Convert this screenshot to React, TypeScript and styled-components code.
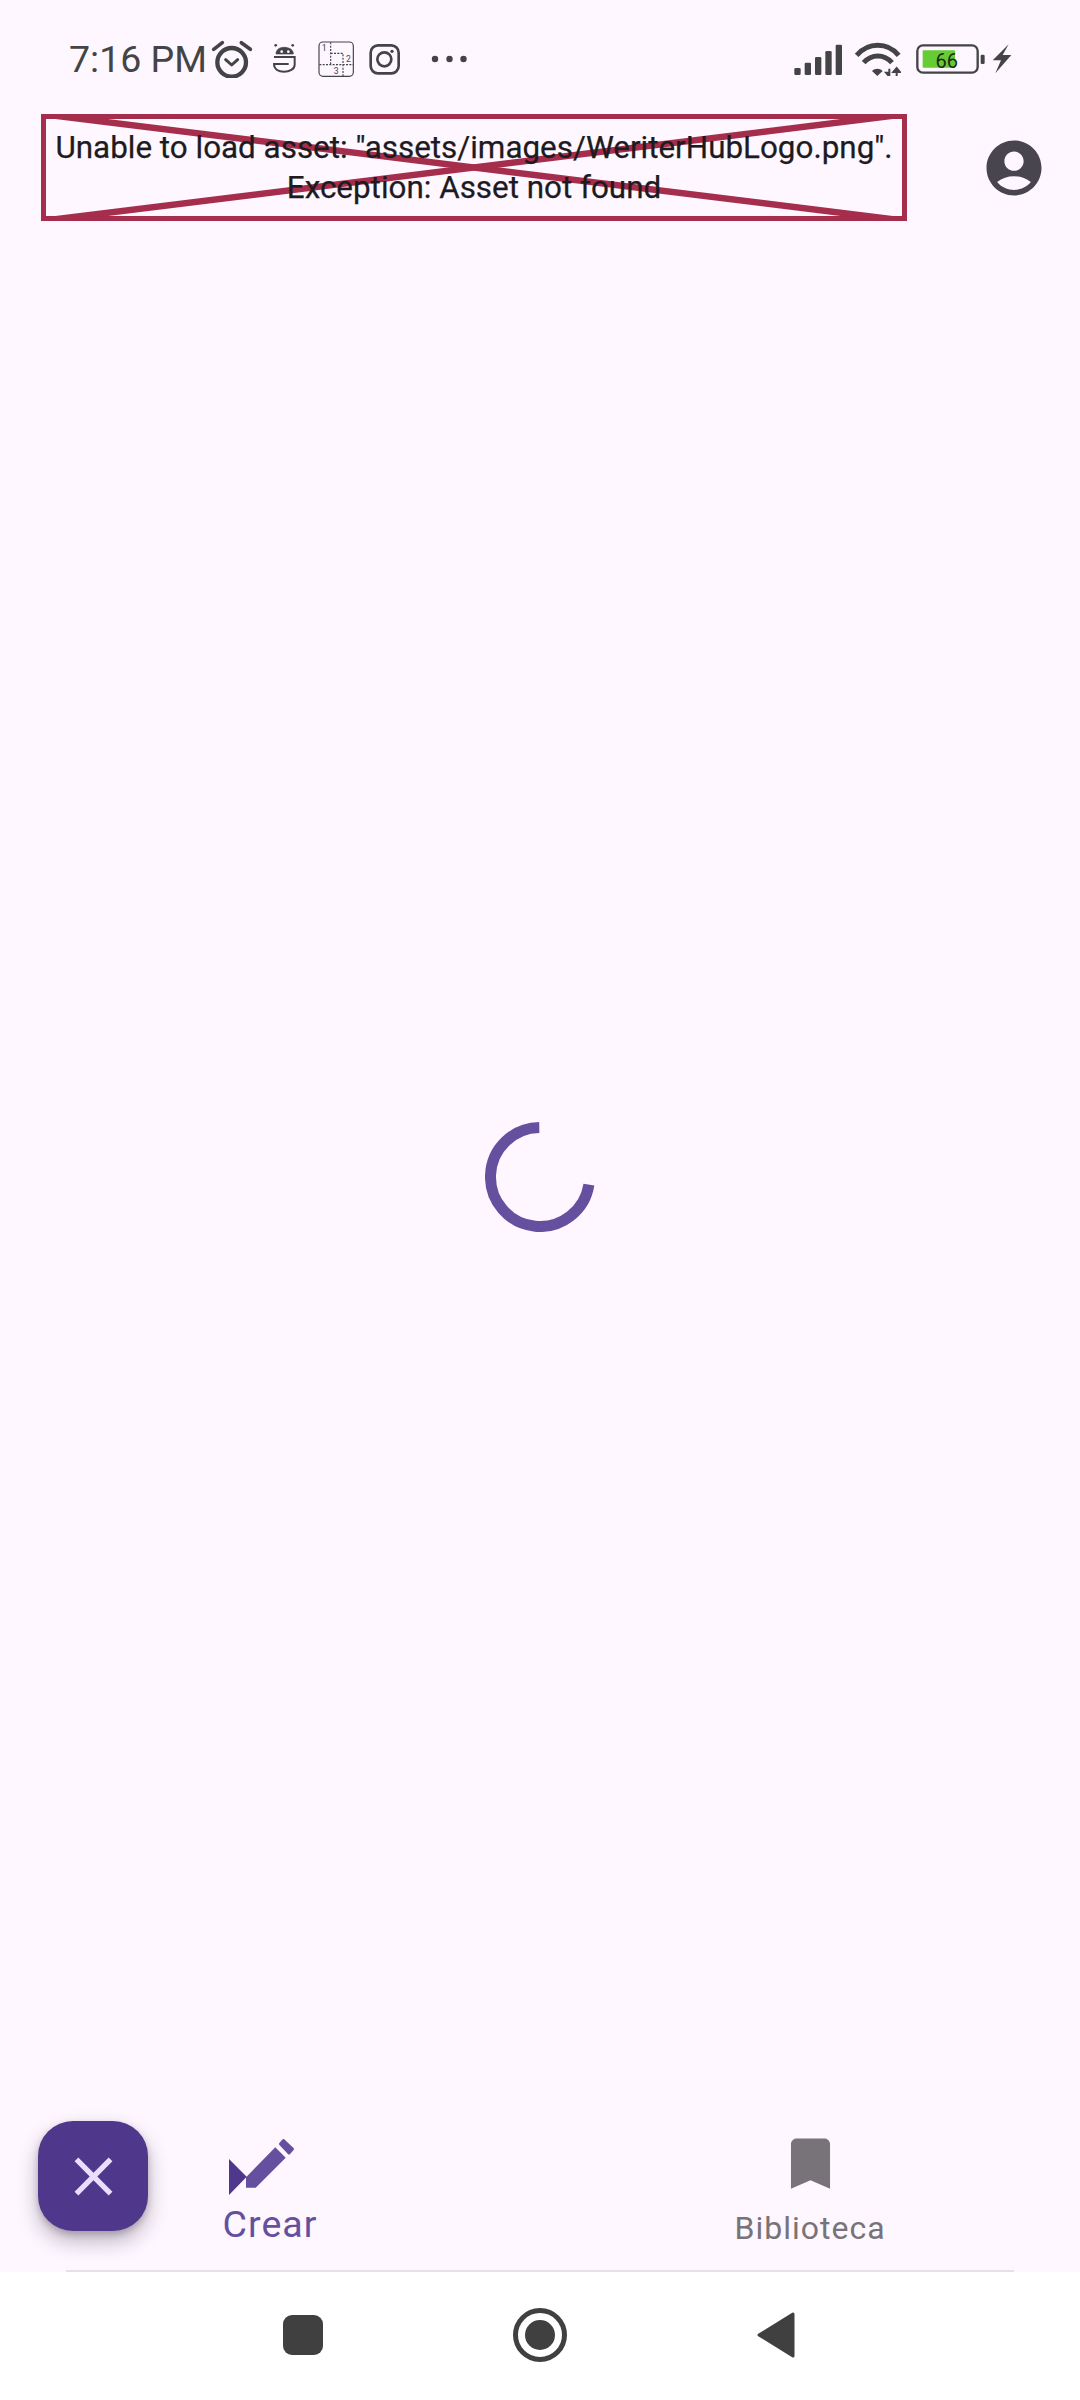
import styled, { createGlobalStyle } from 'styled-components';
import { MdAccountCircle, MdBookmark, MdClose } from 'react-icons/md';

const GlobalStyle = createGlobalStyle`
    html, body {
        margin: 0;
        padding: 0;
        background: #ffffff;
    }
    * {
        box-sizing: border-box;
    }
`;

const iconColor = '#444446';

function AlarmIcon() {
    return (
        <StatusSvg $gap={4} width={42} height={38} viewBox="518 58 126 114" fill="none" stroke={iconColor}>
            <circle cx="580" cy="125" r="43" strokeWidth="13" />
            <path d="M526 86 L552 66 M609 66 L636 86" strokeWidth="11" strokeLinecap="round" />
            <path d="M562 117 L580 133 L598 117" strokeWidth="9" strokeLinecap="round" strokeLinejoin="round" />
        </StatusSvg>
    );
}

function RobotIcon() {
    return (
        <StatusSvg $gap={19} width={24} height={34} viewBox="700 68 72 102" fill="none" stroke={iconColor}>
            <path d="M712 104 C712 90 724 84 736 84 C750 84 764 90 764 104 Z" fill={iconColor} strokeWidth="2" />
            <circle cx="711" cy="78" r="4" fill={iconColor} strokeWidth="0" />
            <circle cx="762" cy="78" r="4" fill={iconColor} strokeWidth="0" />
            <circle cx="729" cy="97" r="4" fill="#fef7ff" strokeWidth="0" />
            <circle cx="749" cy="97" r="4" fill="#fef7ff" strokeWidth="0" />
            <path d="M706 113 H768 V136 C768 150 752 157 736 157 C720 157 706 150 706 134 H750" strokeWidth="6" />
        </StatusSvg>
    );
}

function PuzzleIcon() {
    return (
        <StatusSvg $gap={21.5} width={36} height={36} viewBox="830 62 108 108" fill="none" stroke="#444446">
            <rect x="833" y="65" width="103" height="103" rx="12" strokeWidth="3.5" />
            <path
                d="M868 66 V133 M834 133 H936 M868 99 H905 V167"
                strokeWidth="3.5"
                strokeDasharray="6 4"
            />
            <PuzzleNumber x="841" y="92">1</PuzzleNumber>
            <PuzzleNumber x="914" y="125">2</PuzzleNumber>
            <PuzzleNumber x="877" y="162">3</PuzzleNumber>
        </StatusSvg>
    );
}

function InstagramIcon() {
    return (
        <StatusSvg $gap={15.5} width={31} height={31} viewBox="989 70 93 93" fill="none" stroke={iconColor}>
            <rect x="994" y="74" width="84" height="84" rx="22" strokeWidth="8" />
            <circle cx="1035" cy="116" r="21" strokeWidth="8" />
            <circle cx="1058" cy="92" r="5" fill={iconColor} strokeWidth="0" />
        </StatusSvg>
    );
}

function MoreDots() {
    return (
        <StatusSvg $gap={30} width={40} height={10} viewBox="0 0 40 10" fill={iconColor}>
            <circle cx="5" cy="5" r="3.2" />
            <circle cx="19.5" cy="5" r="3.2" />
            <circle cx="33.5" cy="5" r="3.2" />
        </StatusSvg>
    );
}

function SignalIcon() {
    const bars = [
        { x: 103, y: 143 },
        { x: 134, y: 127 },
        { x: 165, y: 110 },
        { x: 196, y: 92 },
        { x: 227, y: 73 },
    ];
    return (
        <StatusSvg $gap={0} width={48} height={31} viewBox="102 71 144 93" fill={iconColor}>
            {bars.map((b) => (
                <rect key={b.x} x={b.x} y={b.y} width="19" height={164 - b.y} rx="4" />
            ))}
        </StatusSvg>
    );
}

function WifiIcon() {
    return (
        <StatusSvg $gap={12} width={47} height={34} viewBox="282 64 141 102" fill="none" stroke={iconColor}>
            <path d="M290 104 C325 64 382 64 416 104" strokeWidth="15" />
            <path d="M311 126 C335 99 372 99 396 126" strokeWidth="15" />
            <path d="M336 151 L352 166 L368 151 C359 142 345 142 336 151 Z" fill={iconColor} strokeWidth="0" />
            <path d="M388 144 V168 M378 156 L388 168 L388 156 Z M410 168 V142 M400 154 L410 142 L420 154 Z" fill={iconColor} strokeWidth="6" />
        </StatusSvg>
    );
}

function BatteryIcon() {
    return (
        <StatusSvg $gap={15} width={70} height={31} viewBox="468 71 210 93" fill="none" stroke={iconColor}>
            <rect x="472" y="75" width="181" height="82" rx="17" strokeWidth="7" />
            <rect x="488" y="90" width="97" height="52" rx="3" fill="#66cc33" strokeWidth="0" />
            <BatteryLevel x="560" y="143" textAnchor="middle">66</BatteryLevel>
            <rect x="662" y="103" width="12" height="28" rx="4" fill={iconColor} strokeWidth="0" />
        </StatusSvg>
    );
}

function BoltIcon() {
    return (
        <StatusSvg $gap={6} width={20} height={30} viewBox="695 73 60 90" fill={iconColor}>
            <path d="M745 74 L697 122 H722 L705 161 L753 106 H727 Z" />
        </StatusSvg>
    );
}

function PencilIcon() {
    return (
        <svg width={90} height={65} viewBox="0 0 90 65">
            <path d="M4 24 L21.7 41.7 L4 60 Z" fill="#4f378b" />
            <path d="M21 42.3 L50.3 12.3 L60.7 22.7 L30.7 52.7 H21 Z" fill="#65509f" />
            <path
                d="M55.5 9 L58.5 5.5 L67.5 14 L64 18 Z"
                fill="#65509f"
                stroke="#65509f"
                strokeWidth="3"
                strokeLinejoin="round"
            />
        </svg>
    );
}

export default function App() {
    return (
        <Screen>
            <GlobalStyle />
            <StatusBar>
                <Clock>7:16 PM</Clock>
                <AlarmIcon />
                <RobotIcon />
                <PuzzleIcon />
                <InstagramIcon />
                <MoreDots />
                <StatusRight>
                    <SignalIcon />
                    <WifiIcon />
                    <BatteryIcon />
                    <BoltIcon />
                </StatusRight>
            </StatusBar>
            <AppBar>
                <MissingImage>
                    <CrossLines viewBox="0 0 866 107" preserveAspectRatio="none">
                        <line x1="0" y1="0" x2="866" y2="107" />
                        <line x1="866" y1="0" x2="0" y2="107" />
                    </CrossLines>
                    <ErrorText>
                        Unable to load asset: "assets/images/WeriterHubLogo.png".
                        <br />
                        Exception: Asset not found
                    </ErrorText>
                </MissingImage>
                <Avatar>
                    <MdAccountCircle size={66} />
                </Avatar>
            </AppBar>
            <Content>
                <svg width={110} height={110} viewBox="0 0 110 110">
                    <path
                        d="M54.3 5.5 A49.5 49.5 0 1 0 103.9 62.6"
                        fill="none"
                        stroke="#65509f"
                        strokeWidth="11"
                    />
                </svg>
            </Content>
            <BottomNav>
                <Fab>
                    <MdClose size={65} />
                </Fab>
                <NavItem $active>
                    <NavIcon $top={25}>
                        <PencilIcon />
                    </NavIcon>
                    <NavLabel $active>Crear</NavLabel>
                </NavItem>
                <NavItem>
                    <NavIcon $top={20}>
                        <MdBookmark size={67} />
                    </NavIcon>
                    <NavLabel>Biblioteca</NavLabel>
                </NavItem>
            </BottomNav>
            <NavDivider />
            <SystemNav>
                <RecentsKey />
                <svg width={54} height={54} viewBox="0 0 54 54">
                    <circle cx="27" cy="27" r="24.5" fill="none" stroke="#404040" strokeWidth="5" />
                    <circle cx="27" cy="27" r="15" fill="#404040" />
                </svg>
                <svg width={38} height={46} viewBox="0 0 38 46">
                    <path
                        d="M36 2 V44 L2 23 Z"
                        fill="#404040"
                        stroke="#404040"
                        strokeWidth="3"
                        strokeLinejoin="round"
                    />
                </svg>
            </SystemNav>
        </Screen>
    );
}

const Screen = styled.div`
    width: 1080px;
    height: 2400px;
    display: flex;
    flex-direction: column;
    background: #fef7ff;
    font-family: Roboto, 'Liberation Sans', sans-serif;
    overflow: hidden;
`;

const StatusBar = styled.div`
    height: 114px;
    padding: 4px 68px 0 69px;
    display: flex;
    align-items: center;
    flex-shrink: 0;
`;

const Clock = styled.span`
    font-size: 37.5px;
    line-height: 42px;
    color: #444446;
`;

const StatusRight = styled.div`
    margin-left: auto;
    display: flex;
    align-items: center;
`;

const StatusSvg = styled.svg<{ $gap: number }>`
    margin-left: ${({ $gap }) => $gap}px;
    flex-shrink: 0;
`;

const PuzzleNumber = styled.text`
    font-family: Roboto, sans-serif;
    font-size: 26px;
    fill: #444446;
    stroke: none;
`;

const BatteryLevel = styled.text`
    font-family: Roboto, sans-serif;
    font-size: 60px;
    fill: #1f2a14;
    stroke: none;
`;

const AppBar = styled.div`
    height: 107px;
    padding: 0 33px 0 41px;
    display: flex;
    align-items: center;
    justify-content: space-between;
    flex-shrink: 0;
`;

const MissingImage = styled.div`
    position: relative;
    width: 866px;
    height: 107px;
    border: 5px solid #a52e4c;
    display: flex;
    align-items: center;
    justify-content: center;
`;

const CrossLines = styled.svg`
    position: absolute;
    inset: -5px;
    width: 866px;
    height: 107px;

    line {
        stroke: #a52e4c;
        stroke-width: 6.5;
    }
`;

const ErrorText = styled.div`
    position: relative;
    font-size: 31.4px;
    line-height: 40px;
    color: #1d1b20;
    -webkit-text-stroke: 0.25px #1d1b20;
    text-align: center;
    white-space: nowrap;
`;

const Avatar = styled.div`
    display: flex;
    color: #49454f;
`;

const Content = styled.main`
    flex: 1;
    display: flex;
    align-items: center;
    justify-content: center;
    padding-top: 22px;
`;

const BottomNav = styled.nav`
    position: relative;
    height: 160px;
    display: grid;
    grid-template-columns: 1fr 1fr;
    flex-shrink: 0;
    box-shadow: 0 -10px 0 #fdf8fe;
`;

const Fab = styled.div`
    position: absolute;
    left: 38px;
    top: 11px;
    width: 110px;
    height: 110px;
    border-radius: 35px;
    background: #4f378b;
    color: #eaddff;
    display: flex;
    align-items: center;
    justify-content: center;
    box-shadow: 0 10px 20px rgba(30, 20, 40, 0.3), 0 3px 6px rgba(30, 20, 40, 0.2);
`;

const NavItem = styled.div<{ $active?: boolean }>`
    display: flex;
    flex-direction: column;
    align-items: center;
    color: ${({ $active }) => ($active ? '#65509f' : '#787378')};
`;

const NavIcon = styled.div<{ $top: number }>`
    display: flex;
    height: 90px;
    padding-top: ${({ $top }) => $top}px;
`;

const NavLabel = styled.span<{ $active?: boolean }>`
    font-size: ${({ $active }) => ($active ? 37.5 : 32)}px;
    letter-spacing: 1px;
    line-height: 44px;
    margin-top: ${({ $active }) => ($active ? 2 : 6)}px;
`;

const NavDivider = styled.div`
    height: 2px;
    margin: 0 66px;
    background: #e4e2e6;
    flex-shrink: 0;
`;

const SystemNav = styled.div`
    height: 128px;
    padding: 0 3px 2px 0;
    display: flex;
    align-items: center;
    justify-content: center;
    gap: 190px;
    background: #ffffff;
    flex-shrink: 0;
`;

const RecentsKey = styled.div`
    width: 40px;
    height: 40px;
    border-radius: 9px;
    background: #404040;
`;
